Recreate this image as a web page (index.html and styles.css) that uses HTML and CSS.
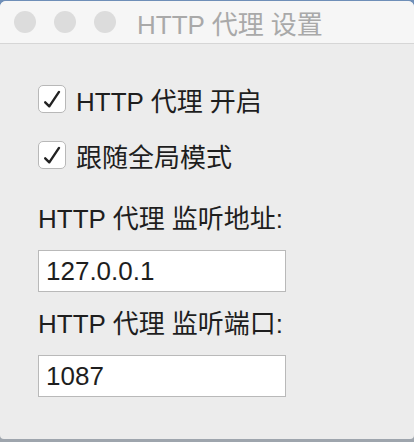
FILE: index.html
```html
<!DOCTYPE html>
<html lang="zh-CN">
<head>
    <meta charset="UTF-8">
    <meta name="viewport" content="width=device-width, initial-scale=1.0">
    <title>HTTP 代理 设置</title>
    <link rel="stylesheet" href="styles.css">
</head>
<body>
    <div class="window">
        <div class="titlebar">
            <span class="light"></span>
            <span class="light"></span>
            <span class="light"></span>
            <span class="title">HTTP 代理 设置</span>
        </div>
        <div class="content">
            <label class="check-row">
                <span class="box">
                    <svg width="28" height="28" viewBox="0 0 28 28"><path d="M7.2 17.3 L11.3 21.3 L21 6.9" fill="none" stroke="#222" stroke-width="2.4" stroke-linecap="round" stroke-linejoin="round"/></svg>
                </span>
                <span>HTTP 代理 开启</span>
            </label>
            <label class="check-row second">
                <span class="box">
                    <svg width="28" height="28" viewBox="0 0 28 28"><path d="M7.2 17.3 L11.3 21.3 L21 6.9" fill="none" stroke="#222" stroke-width="2.4" stroke-linecap="round" stroke-linejoin="round"/></svg>
                </span>
                <span>跟随全局模式</span>
            </label>
            <div class="field-label first">HTTP 代理 监听地址:</div>
            <div class="field">127.0.0.1</div>
            <div class="field-label">HTTP 代理 监听端口:</div>
            <div class="field">1087</div>
        </div>
    </div>
</body>
</html>
```

FILE: styles.css
```css
body {
    margin: 0;
    height: 442px;
    background: linear-gradient(#6f8fb8 0 30px, #9ea5ad 30px);
    font-family: 'Liberation Sans', 'Noto Sans CJK SC', sans-serif;
    overflow: hidden;
}
.window {
    margin-top: 1px;
    height: 438px;
    background: #ececec;
    border-radius: 6px 6px 4px 4px;
    overflow: hidden;
    display: flex;
    flex-direction: column;
}
.titlebar {
    height: 42px;
    flex-shrink: 0;
    display: flex;
    align-items: center;
    padding-left: 14px;
    gap: 18px;
    background: #f6f6f6;
    border-bottom: 1px solid #d6d6d6;
}
.light {
    width: 22px;
    height: 22px;
    border-radius: 50%;
    background: #dcdcdc;
}
.title {
    margin-left: 3px;
    font-size: 26px;
    color: #a9a9a9;
}
.content {
    padding: 38px 0 0 38px;
    display: flex;
    flex-direction: column;
    align-items: flex-start;
    color: #1e1e1e;
    font-size: 26px;
}
.check-row {
    height: 34px;
    display: flex;
    align-items: center;
    gap: 10px;
}
.check-row.second { margin-top: 22px; }
.box {
    width: 26px;
    height: 26px;
    border: 1px solid #b8b8b8;
    border-radius: 5px;
    background: #fff;
    display: flex;
}
.box svg { margin: -1px; }
.field-label {
    line-height: 30px;
    margin-top: 17px;
}
.field-label.first { margin-top: 32px; }
.field {
    margin-top: 16px;
    width: 239px;
    height: 40px;
    line-height: 40px;
    padding-left: 7px;
    background: #fff;
    border: 1px solid #b9b9b9;
}
```
